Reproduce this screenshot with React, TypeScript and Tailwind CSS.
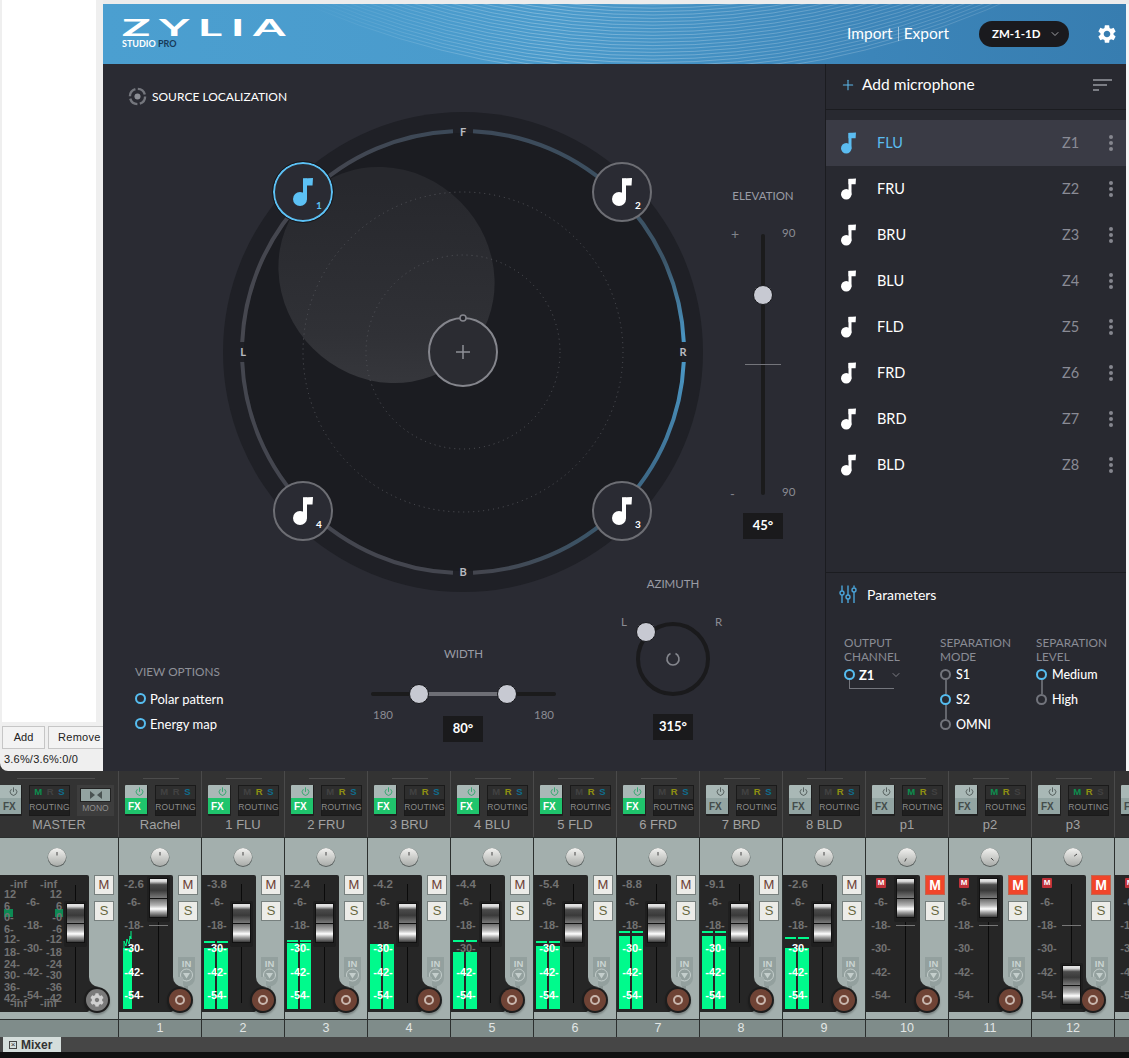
// App.tsx
import { MdSettings } from "react-icons/md";
import { FaCog } from "react-icons/fa";
import { ChevronDown, Plus, Power } from "lucide-react";

const ui = "font-['Lato',sans-serif]";
const mix = "font-['Liberation_Sans',sans-serif]";

function arc(r: number, a0: number, a1: number) {
  const p = (a: number) => {
    const t = ((a - 90) * Math.PI) / 180;
    return `${(240 + r * Math.cos(t)).toFixed(2)} ${(240 + r * Math.sin(t)).toFixed(2)}`;
  };
  return `M ${p(a0)} A ${r} ${r} 0 0 1 ${p(a1)}`;
}

function Note({ className }: { className: string }) {
  return (
    <svg viewBox="0 0 20 28" className={className} fill="currentColor">
      <circle cx="7" cy="21" r="7" />
      <rect x="10" y="0.5" width="4" height="21" />
      <path d="M10 0.5 L20 0 L19.5 7.5 L10 7.5 Z" />
    </svg>
  );
}

function Node({ n, pos, active }: { n: number; pos: string; active?: boolean }) {
  return (
    <div
      className={`absolute ${pos} w-[60px] h-[60px] rounded-full bg-[#2a2b33] border-2 flex items-center justify-center ${
        active ? "border-[#5cc1f5] text-[#5cc1f5] outline outline-1 outline-[#15161a]" : "border-[#6d6e74] text-white"
      }`}
    >
      <Note className="w-[20px] h-[28px] -ml-[1px]" />
      <span className={`absolute left-[41px] top-[34px] text-[10px] font-bold ${ui}`}>{n}</span>
    </div>
  );
}

function Dial() {
  return (
    <div className="relative w-[480px] h-[480px] shrink-0">
      <svg viewBox="0 0 480 480" className="absolute inset-0 w-full h-full">
        <defs>
          <linearGradient id="blob" x1="0" y1="0" x2="1" y2="1">
            <stop offset="0.2" stopColor="#27282d" />
            <stop offset="0.7" stopColor="#303136" />
            <stop offset="1" stopColor="#3b3c41" />
          </linearGradient>
          <linearGradient id="fr" gradientUnits="userSpaceOnUse" x1="260" y1="20" x2="460" y2="230">
            <stop offset="0" stopColor="#3c4958" />
            <stop offset="0.75" stopColor="#3c5568" />
            <stop offset="1" stopColor="#4a96c4" />
          </linearGradient>
          <linearGradient id="rb" gradientUnits="userSpaceOnUse" x1="460" y1="250" x2="260" y2="460">
            <stop offset="0" stopColor="#4a96c4" />
            <stop offset="0.35" stopColor="#3e6c8c" />
            <stop offset="0.65" stopColor="#3b5467" />
            <stop offset="1" stopColor="#44464f" />
          </linearGradient>
          <linearGradient id="lf" gradientUnits="userSpaceOnUse" x1="20" y1="230" x2="225" y2="20">
            <stop offset="0" stopColor="#46474f" />
            <stop offset="0.6" stopColor="#44464f" />
            <stop offset="1" stopColor="#3c4958" />
          </linearGradient>
        </defs>
        <circle cx="240" cy="240" r="240" fill="#1f2026" />
        <circle cx="240" cy="240" r="219" fill="#1b1c21" />
        <ellipse cx="163.5" cy="163" rx="112" ry="104" transform="rotate(45 163.5 163)" fill="url(#blob)" />
        <circle cx="240" cy="240" r="160" fill="none" stroke="#55565c" strokeWidth="1" strokeDasharray="1 4" />
        <circle cx="240" cy="240" r="97" fill="none" stroke="#55565c" strokeWidth="1" strokeDasharray="1 4" />
        <path d={arc(221, 2.6, 87.4)} fill="none" stroke="url(#fr)" strokeWidth="4" />
        <path d={arc(221, 92.6, 177.4)} fill="none" stroke="url(#rb)" strokeWidth="4" />
        <path d={arc(221, 182.6, 267.4)} fill="none" stroke="#44464f" strokeWidth="4" />
        <path d={arc(221, 272.6, 357.4)} fill="none" stroke="url(#lf)" strokeWidth="4" />
        <g fontFamily="Lato, sans-serif" fontSize="11" fontWeight="700" fill="#b9bac0" textAnchor="middle">
          <text x="240" y="24">F</text>
          <text x="240" y="464">B</text>
          <text x="20" y="244">L</text>
          <text x="460" y="244">R</text>
        </g>
        <circle cx="240" cy="240" r="34" fill="#2b2c32" stroke="#85868d" strokeWidth="2" />
        <circle cx="240" cy="206" r="3" fill="#23242a" stroke="#85868d" strokeWidth="1.5" />
        <path d="M233 240 H247 M240 233 V247" stroke="#8f9097" strokeWidth="1.5" />
      </svg>
      <Node n={1} pos="left-[50px] top-[50px]" active />
      <Node n={2} pos="left-[369px] top-[50px]" />
      <Node n={3} pos="left-[369px] top-[369px]" />
      <Node n={4} pos="left-[50px] top-[369px]" />
    </div>
  );
}

function Thumb({ className = "" }: { className?: string }) {
  return <div className={`w-[20px] h-[20px] rounded-full bg-[#c7c9d2] border border-[#17181c] ${className}`} />;
}

function ValueBox({ children }: { children: string }) {
  return (
    <div className={`w-[40px] h-[26px] bg-[#1a1a1c] text-white text-[13px] font-bold flex items-center justify-center ${ui}`}>
      {children}
    </div>
  );
}

function Elevation() {
  return (
    <div className={`w-[80px] ml-[20px] flex flex-col items-center pt-[76px] ${ui}`}>
      <div className="text-[11.5px] text-[#9a9ca5] leading-[16px]">ELEVATION</div>
      <div className="relative w-[80px] h-[261px] mt-[30px] flex justify-center">
        <div className="w-[4px] h-full rounded-full bg-[#1b1b1c]" />
        <div className="absolute left-[22px] top-[130px] w-[36px] h-px bg-[#74757b]" />
        <Thumb className="absolute left-[30px] top-[51px]" />
        <span className="absolute left-[8px] -top-[11px] text-[14px] text-[#80828a]">+</span>
        <span className="absolute left-[59px] -top-[10px] text-[11.5px] text-[#8a8c94]">90</span>
        <span className="absolute left-[7px] top-[251px] text-[13px] text-[#80828a]">-</span>
        <span className="absolute left-[59px] top-[249px] text-[11.5px] text-[#8a8c94]">90</span>
      </div>
      <div className="mt-[18px]">
        <ValueBox>45°</ValueBox>
      </div>
    </div>
  );
}

function Radio({ on }: { on?: boolean }) {
  return <span className={`block shrink-0 w-[11px] h-[11px] rounded-full border-2 ${on ? "border-[#56bdf0]" : "border-[#72747c]"}`} />;
}

function Stack({ items, on }: { items: string[]; on: string }) {
  return (
    <div className="flex flex-col">
      {items.map((t, i) => (
        <div key={t}>
          <div className="flex items-center gap-[5px] h-[11px] text-[12.5px] text-white font-medium">
            <Radio on={t === on} />
            <span>{t}</span>
          </div>
          {i < items.length - 1 && <div className="w-[2px] h-[14px] bg-[#64666d] ml-[4.5px]" />}
        </div>
      ))}
    </div>
  );
}

function ZyliaApp() {
  const rows = ["FLU", "FRU", "BRU", "BLU", "FLD", "FRD", "BRD", "BLD"];
  return (
    <div className={`flex-1 flex flex-col min-w-0 ${ui}`}>
      <header className="relative h-[60px] shrink-0 overflow-hidden flex items-center bg-[linear-gradient(90deg,#4b9fd0,#4a9acb_45%,#3c85b9_75%,#377db0)]">
        <svg viewBox="0 0 1023 60" className="absolute inset-0 w-full h-full">
          <defs>
            <linearGradient id="wave" gradientUnits="userSpaceOnUse" x1="200" y1="0" x2="1000" y2="0">
              <stop offset="0" stopColor="#fff" stopOpacity="0" />
              <stop offset="0.3" stopColor="#fff" stopOpacity="0.28" />
              <stop offset="0.8" stopColor="#fff" stopOpacity="0.16" />
              <stop offset="1" stopColor="#fff" stopOpacity="0.05" />
            </linearGradient>
          </defs>
          {Array.from({ length: 34 }).map((_, i) => (
            <circle key={i} cx="550" cy="-800" r={760 + i * 3.4} fill="none" stroke="url(#wave)" strokeWidth="1" />
          ))}
        </svg>
        <div className="relative ml-[19px] w-[200px] h-full">
          <div className="absolute left-0 top-[15px] origin-left scale-x-[2.13] text-[22px] leading-[18px] tracking-[4px] font-bold text-white">ZYLIA</div>
          <div className="absolute left-0 top-[34px] text-[9px] leading-[12px] font-bold text-white whitespace-nowrap">
            STUDIO <span className="text-[#173a58]">PRO</span>
          </div>
        </div>
        <div className="relative ml-auto flex items-center text-white text-[15.5px]">
          <span>Import</span>
          <span className="mx-[5px] w-px h-[14px] bg-white/50" />
          <span>Export</span>
        </div>
        <div className="relative ml-[30px] w-[90px] h-[26px] rounded-full bg-[#1a1a1e] flex items-center pl-[13px] text-white text-[11.5px] font-bold">
          <span className="flex-1">ZM-1-1D</span>
          <ChevronDown size={12} className="mr-[8px] text-[#a0a0a4]" />
        </div>
        <MdSettings size={22} className="relative ml-[27px] mr-[8px] text-white" />
      </header>

      <div className="flex-1 flex min-h-0">
        <main className="w-[722px] bg-[#2a2b33] flex flex-col">
          <div className="h-[48px] shrink-0 flex items-start pt-[23px] pl-[25px] gap-[5px] text-white text-[12px]">
            <svg viewBox="0 0 20 20" className="w-[19px] h-[19px]">
              <circle cx="10" cy="10" r="8" fill="none" stroke="#74767d" strokeWidth="2.5" strokeDasharray="10 2.6" />
              <circle cx="10" cy="10" r="3.2" fill="#8c8e95" />
            </svg>
            <span className="leading-[19px]">SOURCE LOCALIZATION</span>
          </div>
          <div className="flex mt-0 h-[480px] shrink-0">
            <div className="ml-[120px]">
              <Dial />
            </div>
            <Elevation />
          </div>
          <div className="flex -mt-[16px]">
            <div className="ml-[32px] w-[236px] pt-[89px] text-[11.8px] leading-[14px] text-[#8f9199]">
              VIEW OPTIONS
              <div className="mt-[14px] flex flex-col gap-[14px] text-[13px] text-white">
                <div className="flex items-center gap-[4px] h-[11px] -ml-px pl-px"><Radio on />Polar pattern</div>
                <div className="flex items-center gap-[4px] h-[11px] -ml-px pl-px"><Radio on />Energy map</div>
              </div>
            </div>
            <div className="w-[185px] pt-[71px] flex flex-col items-center">
              <div className="text-[11.5px] leading-[14px] text-[#9a9ca5]">WIDTH</div>
              <div className="relative w-full h-[18px] mt-[24px] flex items-center">
                <div className="w-full h-[4px] rounded-full bg-[#1b1b1c]" />
                <div className="absolute left-[47px] w-[88px] h-[4px] bg-[#6e6f76]" />
                <Thumb className="absolute left-[38px]" />
                <Thumb className="absolute left-[126px]" />
              </div>
              <div className="w-full flex items-start mt-[3px]">
                <span className="w-[72px] pl-[2px] text-[11.5px] text-[#8a8c94]">180</span>
                <div className="mt-[10px]">
                  <ValueBox>80°</ValueBox>
                </div>
                <span className="w-[73px] pr-[2px] text-right text-[11.5px] text-[#8a8c94]">180</span>
              </div>
            </div>
            <div className="ml-[62px] w-[110px] pt-[1px] flex flex-col items-center">
              <div className="text-[11.5px] leading-[14px] text-[#9a9ca5]">AZIMUTH</div>
              <div className="relative w-[110px] h-[100px] mt-[16px]">
                <div className="absolute left-[18px] top-[15px] w-[74px] h-[74px] rounded-full border-[4px] border-[#1a1a1c]" />
                <Thumb className="absolute left-[18px] top-[15px]" />
                <span className="absolute left-[3px] top-[6px] text-[11.5px] text-[#8a8c94]">L</span>
                <span className="absolute left-[97px] top-[6px] text-[11.5px] text-[#8a8c94]">R</span>
                <svg viewBox="0 0 16 16" className="absolute left-[47px] top-[44px] w-[16px] h-[16px]">
                  <path d="M5.5 2.6 A6 6 0 1 0 10.5 2.6" fill="none" stroke="#85878e" strokeWidth="1.6" />
                </svg>
              </div>
              <div className="mt-[7px]">
                <ValueBox>315°</ValueBox>
              </div>
            </div>
          </div>
        </main>

        <aside className="flex-1 min-w-0 bg-[#282930] border-l border-[#1b1c20] flex flex-col">
          <div className="h-[46px] shrink-0 border-b border-[#1b1c20] flex items-center pb-[3px] px-[14px] text-white text-[15.5px]">
            <Plus size={16} strokeWidth={1.6} className="text-[#5cb8ea] mr-[6px]" />
            <span className="flex-1">Add microphone</span>
            <div className="flex flex-col gap-[3px]">
              <div className="w-[19px] h-[2px] bg-[#7b7d84]" />
              <div className="w-[14px] h-[2px] bg-[#7b7d84]" />
              <div className="w-[6px] h-[2px] bg-[#7b7d84]" />
            </div>
          </div>
          <div className="pt-[10px] flex-1">
            {rows.map((r, i) => (
              <div key={r} className={`h-[46px] flex items-center pl-[15px] pr-[13px] text-[14.5px] ${i === 0 ? "bg-[#3a3b45] text-[#5bbcf0]" : "text-white"}`}>
                <Note className="w-[15px] h-[22px]" />
                <span className="ml-[21px] flex-1">{r}</span>
                <span className="w-[47px] text-[#8a8b95]">Z{i + 1}</span>
                <div className="flex flex-col gap-[2px]">
                  <span className="w-[4px] h-[4px] rounded-full bg-[#85868e]" />
                  <span className="w-[4px] h-[4px] rounded-full bg-[#85868e]" />
                  <span className="w-[4px] h-[4px] rounded-full bg-[#85868e]" />
                </div>
              </div>
            ))}
          </div>
          <div className="h-[199px] shrink-0 border-t border-[#1b1c20] pl-[13px]">
            <div className="h-[42px] flex items-center gap-[10px] text-[14px] text-white">
              <svg viewBox="0 0 18 18" className="w-[18px] h-[18px]" fill="none" stroke="#4aa3d8" strokeWidth="1.4">
                <path d="M3 0.5 V6 M3 10 V18 M9 0.5 V10 M9 14 V18 M15 0.5 V2.5 M15 7 V18" />
                <circle cx="3" cy="8" r="2" />
                <circle cx="9" cy="12" r="2" />
                <circle cx="15" cy="5" r="2" />
              </svg>
              <span>Parameters</span>
            </div>
            <div className="flex mt-[21px] pl-[5px] text-[11.8px] leading-[14px] text-[#8a8c95]">
              <div className="w-[96px]">
                OUTPUT<br />CHANNEL
                <div className="mt-[5px] flex items-center gap-[4px] h-[11px] text-[13px] text-white font-bold">
                  <Radio on />Z1
                  <ChevronDown size={12} strokeWidth={1.4} className="ml-[12px] text-[#a0a1a8]" />
                </div>
                <div className="ml-[4.5px] w-[45px] h-[9px] border-l border-b border-[#74767d]" />
              </div>
              <div className="w-[96px]">
                SEPARATION<br />MODE
                <div className="mt-[5px]"><Stack items={["S1", "S2", "OMNI"]} on="S2" /></div>
              </div>
              <div>
                SEPARATION<br />LEVEL
                <div className="mt-[5px]"><Stack items={["Medium", "High"]} on="Medium" /></div>
              </div>
            </div>
          </div>
        </aside>
      </div>
    </div>
  );
}

function Sidebar() {
  return (
    <div className={`w-[103px] shrink-0 bg-[#efefef] rounded-bl-[8px] overflow-hidden flex flex-col text-[#222] ${mix}`}>
      <div className="h-[722px] ml-[2px] w-[94px] bg-white shrink-0" />
      <div className="flex gap-[3px] ml-[2px] mt-[4px]">
        <div className="w-[43px] h-[23px] shrink-0 border border-[#c6c6c6] bg-[#f3f3f3] text-[11px] flex items-center justify-center">Add</div>
        <div className="w-[60px] h-[23px] shrink-0 border border-[#c6c6c6] bg-[#f3f3f3] text-[11px] tracking-[0.3px] pl-[9px] flex items-center">Remove</div>
      </div>
      <div className="ml-[4px] mt-[3px] text-[11px] leading-[14px] tracking-[0.2px] whitespace-nowrap">3.6%/3.6%:0/0</div>
    </div>
  );
}

function FxButton({ on, partial }: { on?: boolean; partial?: boolean }) {
  return (
    <div className={`${partial ? "w-[22px] rounded-r-[1px]" : "w-[23px] rounded-[1px]"} h-[31px] shrink-0 overflow-hidden border-b-2 border-r border-[#1f1f1f] flex flex-col`}>
      <div className="h-[13px] bg-[#a9b8b6] flex justify-end items-center pr-[3px]">
        <Power size={9} strokeWidth={2} className={on ? "text-[#16a35c]" : "text-[#3d4544]"} />
      </div>
      <div className={`flex-1 flex items-center pl-[3px] text-[10px] font-bold ${on ? "bg-[#1fc46c] text-white" : "bg-[#93a5a3] text-[#434c4b]"}`}>FX</div>
    </div>
  );
}

function Routing({ m, r, s }: { m?: boolean; r?: boolean; s?: boolean }) {
  return (
    <div className="w-[41px] h-[31px] shrink-0 border border-[#1a1a1a] flex flex-col">
      <div className="h-[13px] bg-[#2e2e2e] flex items-center justify-around px-[2px] text-[9.5px] font-bold">
        <span className={m ? "text-[#0c8f4e]" : "text-[#424242]"}>M</span>
        <span className={r ? "text-[#8e8e12]" : "text-[#424242]"}>R</span>
        <span className={s ? "text-[#0e6e8e]" : "text-[#424242]"}>S</span>
      </div>
      <div className="flex-1 bg-[#1f1f1f] text-[#8b8b8b] text-[8.5px] tracking-[0.2px] flex items-center justify-center">ROUTING</div>
    </div>
  );
}

function Knob({ x, y }: { x: number; y: number }) {
  return (
    <svg viewBox="0 0 20 20" className="w-[20px] h-[20px]">
      <defs>
        <linearGradient id="knob" x1="0" y1="0" x2="0" y2="1">
          <stop offset="0" stopColor="#f2f2f0" />
          <stop offset="1" stopColor="#a9aca9" />
        </linearGradient>
      </defs>
      <circle cx="10" cy="10.5" r="9.4" fill="#59605f" />
      <circle cx="10" cy="10" r="9" fill="url(#knob)" />
      <line x1={10 + x * 1.5} y1={10 + y * 1.5} x2={10 + x * 5} y2={10 + y * 5} stroke="#444" strokeWidth="1" />
    </svg>
  );
}

function MsButton({ label, red }: { label: string; red?: boolean }) {
  return (
    <div
      className={`w-[20px] h-[20px] border flex items-center justify-center ${
        red
          ? "bg-[#f0452a] border-[#c2644f] text-white text-[14px] font-bold"
          : label === "M"
          ? "bg-[#ecece8] border-[#77807e] text-[#6b3d33] text-[13px]"
          : "bg-[#ecece8] border-[#77807e] text-[#66683f] text-[13px]"
      }`}
    >
      {label}
    </div>
  );
}

function Fader({ left, top }: { left: number; top: number }) {
  return (
    <div className="absolute" style={{ left, top }}>
      <div className="absolute -left-[2px] -top-[2px] w-[23px] h-[46px] bg-[#1f1f1f] rounded-[2px]" />
      <div className="relative w-[19px] h-[40px] flex flex-col border border-[#111]">
        <div className="h-[19px] bg-[linear-gradient(180deg,#e6e6e6,#dcdcdc_12%,#4b4b4b_30%,#3a3a3a_60%,#7a7a7a)]" />
        <div className="h-px bg-[#111]" />
        <div className="flex-1 bg-[linear-gradient(180deg,#6c6c6c,#b5b5b5_35%,#ffffff_55%,#a0a0a0_75%,#3c3c3c)]" />
      </div>
    </div>
  );
}

const SCALE = [
  { t: "-6-", y: 27 },
  { t: "-18-", y: 50 },
  { t: "-30-", y: 73 },
  { t: "-42-", y: 97 },
  { t: "-54-", y: 120 },
];

type StripData = {
  name: string;
  num: number;
  fx?: boolean;
  val?: string;
  cap: number;
  bar?: number;
  peak?: number;
  single?: boolean;
  unity?: boolean;
  red?: boolean;
  rt?: { m?: boolean; r?: boolean; s?: boolean };
  knob?: [number, number];
};

function Meter({ bar, peak, single }: { bar: number; peak?: number; single?: boolean }) {
  const cols = single ? [{ l: 4, w: 9 }] : [{ l: 2, w: 11 }, { l: 15, w: 11 }];
  return (
    <>
      {cols.map((c) => (
        <div key={c.l}>
          <div className="absolute bg-[#00fa8c]" style={{ left: c.l, width: c.w, top: bar - 875, height: 1009 - bar }} />
          {peak !== undefined && <div className="absolute h-[2px] bg-[#00fa8c]" style={{ left: c.l, width: c.w, top: peak - 875 }} />}
        </div>
      ))}
      {single && (
        <svg viewBox="0 0 10 18" className="absolute left-[4px] top-[55px] w-[10px] h-[18px]" fill="none" stroke="#00fa8c" strokeWidth="1">
          <path d="M1 18 L1 11 L3 16 L4 9 L6 14 L7 6 L8 9 L8 1" />
        </svg>
      )}
    </>
  );
}

function ScaleLabels({ bar, left }: { bar?: number; left: number }) {
  return (
    <>
      {SCALE.map((s) => (
        <span
          key={s.t}
          className={`absolute -translate-x-1/2 text-[11px] leading-[14px] font-bold whitespace-nowrap ${
            bar !== undefined && s.y + 875 > bar - 4 ? "text-white" : "text-[#727272]"
          }`}
          style={{ left, top: s.y - 7 }}
        >
          {s.t}
        </span>
      ))}
    </>
  );
}

function InTag() {
  return (
    <svg viewBox="0 0 17 38" className="w-[17px] h-[38px] mt-[30px]">
      <path d="M0 0 H17 V21 A8.5 8.5 0 0 1 0 21 Z" fill="#93a09e" />
      <text x="8.5" y="9.5" textAnchor="middle" fontFamily="Liberation Sans, sans-serif" fontSize="9.5" fontWeight="700" fill="#c9d3d1">IN</text>
      <circle cx="8.5" cy="18" r="6" fill="none" stroke="#c4cecc" strokeWidth="1" />
      <path d="M5 16 H12 L8.5 21.5 Z" fill="#c4cecc" />
      <path d="M6 29 H10 V33 H12 L8 38 L5 33 H7 Z" fill="#8a9694" />
    </svg>
  );
}

function RoundButton({ panel, center, gear }: { panel: number; center: number; gear?: boolean }) {
  return (
    <>
      <div className="absolute w-[10px] h-[10px] bg-[#262626]" style={{ left: panel, top: 102 }}>
        <div className="w-full h-full bg-[#a3afad] rounded-bl-[10px]" />
      </div>
      <div className="absolute h-[13px] bg-[#262626]" style={{ left: panel, top: 112, width: center - panel }} />
      <div className="absolute w-[26px] h-[26px] rounded-full bg-[#1d1d1d] shadow-[0_2px_2px_rgba(0,0,0,0.25)] flex items-center justify-center" style={{ left: center - 13, top: 112 }}>
        {gear ? (
          <div className="w-[22px] h-[22px] rounded-full bg-[#7a7a7a] flex items-center justify-center">
            <FaCog size={14} className="text-[#cfcfcf]" />
          </div>
        ) : (
          <div className="w-[22px] h-[22px] rounded-full bg-[#6f4335] flex items-center justify-center">
            <div className="w-[10px] h-[10px] rounded-full border-2 border-[#c9b6ad]" />
          </div>
        )}
      </div>
    </>
  );
}

function Strip({ s }: { s: StripData }) {
  return (
    <div className={`w-[83px] shrink-0 flex flex-col ${mix}`}>
      <div className="h-[66px] bg-[#333] border-l border-[#4a4a4a] relative">
        <div className="absolute left-[24px] top-[7px] w-[36px] h-px bg-[#4c4c4c]" />
        <div className="flex pt-[14px] pl-[6px] gap-[7px]">
          <FxButton on={s.fx} />
          <Routing {...s.rt} />
        </div>
        <div className="text-center text-[13px] leading-[16px] text-[#a2a2a2] mt-[1px] whitespace-nowrap">{s.name}</div>
      </div>
      <div className="h-[182px] bg-[#a3afad] border-l border-t border-[#2b2f2e]">
        <div className="h-[37px] flex items-center justify-center">
          <Knob x={s.knob ? s.knob[0] : 0} y={s.knob ? s.knob[1] : -1} />
        </div>
        <div className="flex">
          <div className="relative w-[54px] h-[137px] shrink-0 bg-[#262626] rounded-r-[2px]">
            {s.bar !== undefined && <Meter bar={s.bar} peak={s.peak} single={s.single} />}
            {s.val ? (
              <span className="absolute left-[15px] top-[2px] -translate-x-1/2 text-[11.5px] leading-[14px] font-bold text-[#727272]">{s.val}</span>
            ) : (
              <span className="absolute left-[10px] top-[3px] w-[10px] h-[10px] rounded-[1px] bg-[#c0323a] text-white text-[8px] leading-[10px] font-bold text-center">M</span>
            )}
            <ScaleLabels bar={s.bar} left={15} />
            <div className="absolute left-[39px] top-[9px] w-px h-[119px] bg-[#0a0a0a]" />
            <div className="absolute left-[30px] top-[50px] w-[19px] h-px bg-[#777]" />
            <Fader left={30} top={s.cap - 875} />
            <RoundButton panel={54} center={61} />
          </div>
          <div className="ml-[5px] flex flex-col gap-[6px]">
            <MsButton label="M" red={s.red} />
            <MsButton label="S" />
            <InTag />
          </div>
        </div>
      </div>
      <div className="h-[18px] bg-[#7f8c8a] border-l border-t border-[#2b2f2e] text-center text-[12.5px] leading-[17px] text-[#e2e6e5]">{s.num}</div>
    </div>
  );
}

function MasterStrip() {
  const ticks = [
    ["12", 19], ["6", 31], ["0-", 42], ["6-", 54], ["12-", 64], ["18-", 77], ["24-", 89], ["30-", 100], ["36-", 112], ["42-", 123],
  ] as const;
  const ticksR = [
    ["12", 19], ["6", 31], ["-0", 42], ["-6", 54], ["-12", 64], ["-18", 77], ["-24", 89], ["-30", 100], ["-36", 112], ["-42", 123],
  ] as const;
  return (
    <div className={`w-[118px] shrink-0 flex flex-col ${mix}`}>
      <div className="h-[66px] bg-[#333] relative">
        <div className="absolute left-[17px] top-[7px] w-[78px] h-px bg-[#4c4c4c]" />
        <div className="flex pt-[14px] gap-[7px]">
          <FxButton partial />
          <Routing m s />
          <div className="w-[37px] h-[31px] shrink-0 bg-[#3d3d3d] flex flex-col items-center pt-[3px]">
            <div className="w-[31px] h-[14px] bg-[#93a3a1] border border-[#222] flex items-center justify-center gap-[2px]">
              <div className="w-0 h-0 border-y-[4px] border-y-transparent border-l-[5px] border-l-[#4a5352]" />
              <div className="w-0 h-0 border-y-[4px] border-y-transparent border-r-[5px] border-r-[#4a5352]" />
            </div>
            <div className="text-[8.5px] leading-[13px] text-[#8f8f8f]">MONO</div>
          </div>
        </div>
        <div className="text-center text-[12.5px] leading-[16px] text-[#a2a2a2] mt-[1px] tracking-[0.2px]">MASTER</div>
      </div>
      <div className="h-[182px] bg-[#a3afad] border-t border-[#2b2f2e]">
        <div className="h-[37px] flex items-center justify-center pr-[5px]">
          <Knob x={0} y={-1} />
        </div>
        <div className="flex">
          <div className="relative w-[89px] h-[137px] shrink-0 bg-[#262626] rounded-r-[2px] text-[11px] leading-[14px] font-bold text-[#727272]">
            <div className="absolute left-[4px] top-[34px] w-[9px] h-[8px] bg-[#0d8a54]" />
            <div className="absolute left-[55px] top-[34px] w-[8px] h-[8px] bg-[#0d8a54]" />
            <span className="absolute left-[10px] top-[2px]">-inf</span>
            <span className="absolute left-[40px] top-[2px]">-inf</span>
            <span className="absolute left-[10px] top-[121px]">-inf</span>
            <span className="absolute left-[40px] top-[121px]">-inf</span>
            {ticks.map(([t, y], i) => (
              <span key={i} className="absolute left-[4px]" style={{ top: y - 7 }}>{t}</span>
            ))}
            {ticksR.map(([t, y], i) => (
              <span key={i} className="absolute right-[27px]" style={{ top: y - 7 }}>{t}</span>
            ))}
            <ScaleLabels left={33} />
            <div className="absolute left-[75px] top-[10px] w-px h-[118px] bg-[#0a0a0a]" />
            <Fader left={66} top={28} />
            <RoundButton panel={89} center={97} gear />
          </div>
          <div className="ml-[5px] flex flex-col gap-[6px]">
            <MsButton label="M" />
            <MsButton label="S" />
          </div>
        </div>
      </div>
      <div className="h-[18px] bg-[#7f8c8a] border-t border-[#2b2f2e]" />
    </div>
  );
}

const strips: StripData[] = [
  { name: "Rachel", num: 1, fx: true, val: "-2.6", cap: 878, bar: 948, single: true, rt: { s: true } },
  { name: "1 FLU", num: 2, fx: true, val: "-3.8", cap: 903, bar: 948, peak: 941, rt: { r: true, s: true } },
  { name: "2 FRU", num: 3, fx: true, val: "-2.4", cap: 903, bar: 943, peak: 940, rt: { r: true, s: true } },
  { name: "3 BRU", num: 4, fx: true, val: "-4.2", cap: 903, bar: 944, rt: { r: true, s: true } },
  { name: "4 BLU", num: 5, fx: true, val: "-4.4", cap: 903, bar: 952, peak: 940, rt: { r: true, s: true } },
  { name: "5 FLD", num: 6, fx: true, val: "-5.4", cap: 903, bar: 946, peak: 941, rt: { r: true, s: true } },
  { name: "6 FRD", num: 7, fx: true, val: "-8.8", cap: 903, bar: 936, peak: 931, rt: { r: true, s: true } },
  { name: "7 BRD", num: 8, val: "-9.1", cap: 903, bar: 936, peak: 931, rt: { r: true, s: true } },
  { name: "8 BLD", num: 9, val: "-2.6", cap: 903, bar: 948, peak: 937, rt: { r: true, s: true } },
  { name: "p1", num: 10, cap: 878, red: true, rt: { m: true, r: true }, knob: [-0.45, 0.9] },
  { name: "p2", num: 11, cap: 878, red: true, rt: { m: true, r: true }, knob: [0.7, 0.7] },
  { name: "p3", num: 12, cap: 965, red: true, rt: { m: true, r: true }, knob: [0.8, -0.6] },
  { name: "", num: 13, cap: 878, red: true, rt: { m: true, r: true } },
];

function Mixer() {
  return (
    <div className="flex-1 flex flex-col overflow-hidden">
      <div className="flex h-[266px] shrink-0">
        <MasterStrip />
        {strips.map((s) => (
          <Strip key={s.num} s={s} />
        ))}
      </div>
      <div className="h-[15px] shrink-0 bg-[#464646]">
        <div className={`ml-[3px] w-[58px] h-[15px] bg-[#d5dedc] flex items-center gap-[4px] pl-[6px] text-[12px] font-bold text-[#333] ${mix}`}>
          <span className="w-[8px] h-[8px] border border-[#444] text-[8px] leading-[6px] text-center font-normal">×</span>
          Mixer
        </div>
      </div>
      <div className="flex-1 bg-[#111]" />
    </div>
  );
}

export default function App() {
  return (
    <div className="w-[1129px] h-[1058px] overflow-hidden bg-[#333] flex flex-col">
      <div className="h-[771px] shrink-0 flex">
        <Sidebar />
        <div className="flex-1 flex flex-col bg-[#efefef] min-w-0">
          <div className="h-[4px] shrink-0 bg-[#ececec]" />
          <div className="flex-1 flex min-h-0">
            <ZyliaApp />
            <div className="w-[3px] shrink-0 bg-[#f4f4f4]" />
          </div>
        </div>
      </div>
      <Mixer />
    </div>
  );
}
